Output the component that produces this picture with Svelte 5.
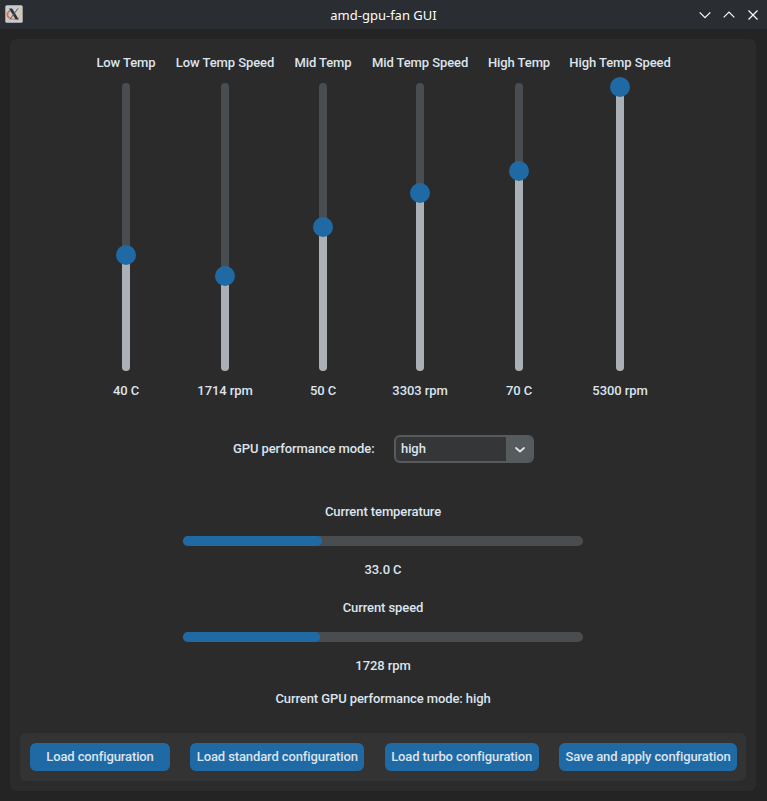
<script>
  const sliders = [
    { label: 'Low Temp', value: '40 C', width: 60, top: 172 },
    { label: 'Low Temp Speed', value: '1714 rpm', width: 98, top: 193 },
    { label: 'Mid Temp', value: '50 C', width: 58, top: 144 },
    { label: 'Mid Temp Speed', value: '3303 rpm', width: 96, top: 110 },
    { label: 'High Temp', value: '70 C', width: 62, top: 88 },
    { label: 'High Temp Speed', value: '5300 rpm', width: 100, top: 4 }
  ];
  const buttons = [
    { label: 'Load configuration', width: 140 },
    { label: 'Load standard configuration', width: 174 },
    { label: 'Load turbo configuration', width: 154 },
    { label: 'Save and apply configuration', width: 178 }
  ];
</script>

<div class="window">
  <header>
    <svg class="logo" width="18" height="18" viewBox="0 0 18 18">
      <rect x=".3" y=".3" width="17.4" height="17.4" rx="1.5" fill="#c9cbcf" />
      <path d="M5.2 5.7C1.7 7 1.4 11.5 4.6 12.9" fill="none" stroke="#f0642d" stroke-width="1.6" />
      <path d="M4.6 12.9C7.2 14.9 11.6 14.8 14 12.7" fill="none" stroke="#ee8a50" stroke-width="1.4" />
      <path d="M13 5.3C16.2 7 16.2 10.9 14 12.7" fill="none" stroke="#e7c08a" stroke-width="1.3" />
      <path d="M4 3.4H7.2L13.8 14.6H10.6Z" fill="#303438" />
      <path d="M13 3.4L4.8 14.6" stroke="#55595d" stroke-width="1" />
    </svg>
    <h1>amd-gpu-fan GUI</h1>
    <div class="controls">
      <svg width="12" height="12" viewBox="0 0 12 12"><path d="M.7 3.3L6 8.6L11.3 3.3" /></svg>
      <svg width="12" height="12" viewBox="0 0 12 12"><path d="M.7 8.4L6 3.1L11.3 8.4" /></svg>
      <svg width="12" height="12" viewBox="0 0 12 12"><path d="M1.5 1.5L10.5 10.5M10.5 1.5L1.5 10.5" /></svg>
    </div>
  </header>

  <main>
    <section class="sliders">
      {#each sliders as s}
        <div class="column" style="width: {s.width}px">
          <span class="label">{s.label}</span>
          <div class="track">
            <div class="level" style="top: {s.top}px"></div>
            <div class="knob" style="top: {s.top}px"></div>
          </div>
          <span class="label">{s.value}</span>
        </div>
      {/each}
    </section>

    <section class="mode">
      <span class="label">GPU performance mode:</span>
      <div class="combo">
        <span class="label">high</span>
        <div class="arrow">
          <svg width="10" height="6" viewBox="0 0 10 6"><path d="M1 1L5 4.5L9 1" /></svg>
        </div>
      </div>
    </section>

    <section class="status">
      <span class="label">Current temperature</span>
      <div class="bar"><div class="fill" style="width: 139px"></div></div>
      <span class="label">33.0 C</span>
      <span class="label second">Current speed</span>
      <div class="bar"><div class="fill" style="width: 137px"></div></div>
      <span class="label">1728 rpm</span>
      <span class="label current">Current GPU performance mode: high</span>
    </section>

    <footer>
      {#each buttons as b}
        <button style="width: {b.width}px">{b.label}</button>
      {/each}
    </footer>
  </main>
</div>

<style>
  :global(body) {
    background: #242424;
  }
  .window {
    box-sizing: border-box;
    width: 767px;
    height: 801px;
    overflow: hidden;
    background: #242424;
    color: #dce4ee;
    font: 500 13px/20px Roboto, sans-serif;
    letter-spacing: -0.09px;
  }
  header {
    display: grid;
    grid-template-columns: 80px 1fr 80px;
    align-items: center;
    height: 29px;
    background: #2a2e32;
  }
  .logo {
    margin-left: 5px;
    margin-bottom: 1px;
  }
  h1 {
    margin: 0;
    color: #fcfcfc;
    font: 400 13px/28px "Noto Sans", sans-serif;
    letter-spacing: 0;
    text-align: center;
  }
  .controls {
    display: flex;
    justify-content: flex-end;
    gap: 12px;
    padding-right: 8px;
  }
  .controls path {
    fill: none;
    stroke: #fcfcfc;
    stroke-width: 1.2;
  }
  main {
    box-sizing: border-box;
    display: flex;
    flex-direction: column;
    width: 746px;
    height: 752px;
    margin: 10px;
    padding: 14px 10px 10px;
    border-radius: 6px;
    background: #2b2b2b;
  }
  .label {
    height: 20px;
    white-space: nowrap;
  }
  .sliders {
    display: flex;
    justify-content: center;
    gap: 20px;
    height: 348px;
  }
  .column {
    display: flex;
    flex-direction: column;
    align-items: center;
  }
  .track {
    position: relative;
    width: 8px;
    height: 288px;
    margin: 10px 0;
    border-radius: 4px;
    background: #4a4d50;
  }
  .level {
    position: absolute;
    left: 0;
    right: 0;
    bottom: 0;
    border-radius: 0 0 4px 4px;
    background: #aab0b5;
  }
  .knob {
    position: absolute;
    left: -6px;
    width: 20px;
    height: 20px;
    margin-top: -10px;
    border-radius: 50%;
    background: #1f6aa5;
  }
  .mode {
    display: flex;
    justify-content: center;
    align-items: center;
    gap: 20px;
    height: 28px;
    margin-top: 34px;
    padding-left: 1px;
  }
  .mode > .label {
    width: 141px;
  }
  .combo {
    box-sizing: border-box;
    display: flex;
    justify-content: space-between;
    align-items: center;
    width: 140px;
    height: 28px;
    padding-left: 5px;
    overflow: hidden;
    border: 2px solid #565b5e;
    border-radius: 6px;
    background: #343638;
  }
  .arrow {
    display: flex;
    justify-content: center;
    align-items: center;
    box-sizing: border-box;
    width: 26px;
    height: 24px;
    padding: 1px 0 0 2px;
    background: #565b5e;
  }
  .arrow path {
    fill: none;
    stroke: #dce4ee;
    stroke-width: 1.8;
    stroke-linecap: round;
    stroke-linejoin: round;
  }
  .status {
    display: flex;
    flex-direction: column;
    align-items: center;
    margin-top: 39px;
  }
  .bar {
    width: 400px;
    height: 10px;
    margin: 14px 0;
    border-radius: 5px;
    background: #4a4d50;
  }
  .fill {
    height: 10px;
    border-radius: 5px;
    background: #1f6aa5;
  }
  .second {
    margin-top: 18px;
  }
  .current {
    margin-top: 13px;
  }
  footer {
    box-sizing: border-box;
    display: flex;
    justify-content: space-between;
    height: 48px;
    margin-top: auto;
    padding: 10px 9px 10px 10px;
    border-radius: 6px;
    background: #333333;
  }
  button {
    height: 28px;
    padding: 0;
    border: 0;
    border-radius: 6px;
    background: #1f6aa5;
    color: #dce4ee;
    font: inherit;
    letter-spacing: -0.11px;
    white-space: nowrap;
  }
</style>
